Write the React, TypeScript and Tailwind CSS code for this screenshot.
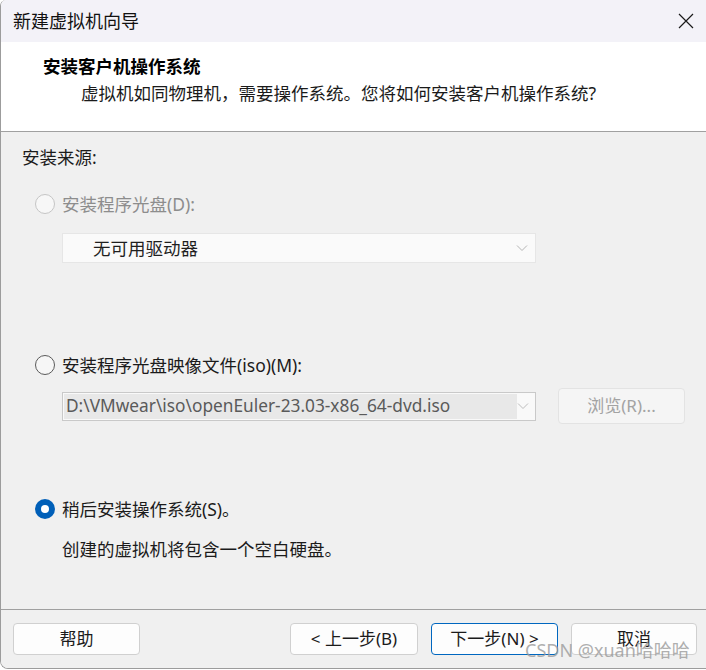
import React from "react";

const font = { fontFamily: '"Noto Sans", "Noto Sans CJK SC", sans-serif' };

function Radio({ state }: { state: "disabled" | "off" | "on" }) {
  if (state === "on") {
    return (
      <span className="w-[20px] h-[20px] rounded-full bg-[#005fb8] flex items-center justify-center shrink-0">
        <span className="w-[8px] h-[8px] rounded-full bg-white" />
      </span>
    );
  }
  if (state === "disabled") {
    return <span className="w-[20px] h-[20px] rounded-full border border-[#c5c5c5] bg-[#f7f7f7] shrink-0" />;
  }
  return <span className="w-[20px] h-[20px] rounded-full border border-[#5a5a5a] bg-[#f6f6f6] shrink-0" />;
}

function Chevron({ color }: { color: string }) {
  return (
    <svg width="12" height="8" viewBox="0 0 12 8" fill="none">
      <path d="M1 1.5 L6 6.5 L11 1.5" stroke={color} strokeWidth="1" />
    </svg>
  );
}

export default function App() {
  return (
    <div className="w-[706px] h-[670px] bg-white relative overflow-hidden" style={font}>
      <div className="w-[706px] h-[669px] flex flex-col border-l border-b border-[#9c9c9c] rounded-bl-[8px] rounded-tl-[6px] overflow-hidden">
        {/* Title bar */}
        <div className="h-[42px] bg-[#f3f2f8] flex items-center justify-between shrink-0">
          <span className="ml-[12px] text-[18px] text-[#111] leading-none">新建虚拟机向导</span>
          <svg className="mr-[12px]" width="16" height="16" viewBox="0 0 16 16" fill="none">
            <path d="M1 1 L15 15 M15 1 L1 15" stroke="#1a1a1a" strokeWidth="1.2" />
          </svg>
        </div>
        {/* Header */}
        <div className="h-[90px] bg-white border-b border-[#a0a0a0] shrink-0 pt-[12px]">
          <div className="ml-[42px] text-[17.5px] font-bold leading-[24px] text-[#000]">安装客户机操作系统</div>
          <div className="ml-[80px] mt-[3px] text-[17.5px] leading-[24px] text-[#1a1a1a]">
            虚拟机如同物理机，需要操作系统。您将如何安装客户机操作系统?
          </div>
        </div>
        {/* Body */}
        <div className="flex-1 bg-[#f0f0f0] flex flex-col">
          <div className="pt-[13px] flex-1">
            <div className="ml-[21px] text-[17.5px] leading-[24px] text-[#1b1b1b]">安装来源:</div>

            <div className="mt-[23px] ml-[34px] flex items-center gap-[7px] h-[24px]">
              <Radio state="disabled" />
              <span className="text-[17.5px] text-[#8d8d8d]">安装程序光盘(D):</span>
            </div>

            <div className="mt-[17px] ml-[61px] w-[474px] h-[30px] bg-[#fafafa] border border-[#e6e6e6] flex items-center justify-between">
              <span className="ml-[30px] text-[17.5px] text-[#1f1f1f]">无可用驱动器</span>
              <span className="mr-[7px] flex"><Chevron color="#b5b5b5" /></span>
            </div>

            <div className="mt-[90px] ml-[34px] flex items-center gap-[7px] h-[24px]">
              <Radio state="off" />
              <span className="text-[17.5px] text-[#1b1b1b]">安装程序光盘映像文件(iso)(M):</span>
            </div>

            <div className="mt-[11px] ml-[61px] flex items-center h-[36px]">
              <div className="w-[474px] h-[29px] bg-[#f9f9f9] border border-[#c9c9c9] flex items-center p-[1px]">
                <div className="w-[465px] h-full bg-[#e8e8e8] flex items-center">
                  <span className="ml-[2px] text-[17.3px] text-[#5a5a5a] whitespace-nowrap">
                    D:\VMwear\iso\openEuler-23.03-x86_64-dvd.iso
                  </span>
                </div>
                <span className="ml-auto mr-[5px] flex"><Chevron color="#bdbdbd" /></span>
              </div>
              <button className="ml-[22px] w-[127px] h-[36px] rounded-[4px] bg-[#f5f5f5] border border-[#e3e3e3] text-[17px] text-[#a3a3a3]">
                浏览(R)...
              </button>
            </div>

            <div className="mt-[73px] ml-[34px] flex items-center gap-[7px] h-[24px]">
              <Radio state="on" />
              <span className="text-[17.5px] text-[#1b1b1b]">稍后安装操作系统(S)。</span>
            </div>

            <div className="mt-[16px] ml-[61px] text-[17.5px] leading-[24px] text-[#1b1b1b]">创建的虚拟机将包含一个空白硬盘。</div>
          </div>

          {/* Footer */}
          <div className="h-[59px] border-t border-[#a0a0a0] shrink-0 flex items-start pt-[13px]">
            <button className="ml-[12px] w-[127px] h-[32px] rounded-[4px] bg-[#fdfdfd] border border-[#d0d0d0] text-[17px] text-[#1b1b1b]">
              帮助
            </button>
            <button className="ml-[150px] w-[128px] h-[32px] rounded-[4px] bg-[#fdfdfd] border border-[#d0d0d0] text-[17px] text-[#1b1b1b]">
              &lt; 上一步(B)
            </button>
            <button className="ml-[13px] w-[127px] h-[32px] rounded-[4px] bg-[#fdfdfd] border border-[#0067c0] text-[17px] text-[#1b1b1b]">
              下一步(N) &gt;
            </button>
            <button className="ml-[13px] w-[126px] h-[32px] rounded-[4px] bg-[#fdfdfd] border border-[#d0d0d0] text-[17px] text-[#1b1b1b]">
              取消
            </button>
          </div>
        </div>
      </div>
      {/* Watermark */}
      <div className="absolute left-[525px] top-[637px] text-[18px] leading-[26px] text-[#9a9a9a]/80 whitespace-nowrap pointer-events-none">
        CSDN @xuan哈哈哈
      </div>
    </div>
  );
}
